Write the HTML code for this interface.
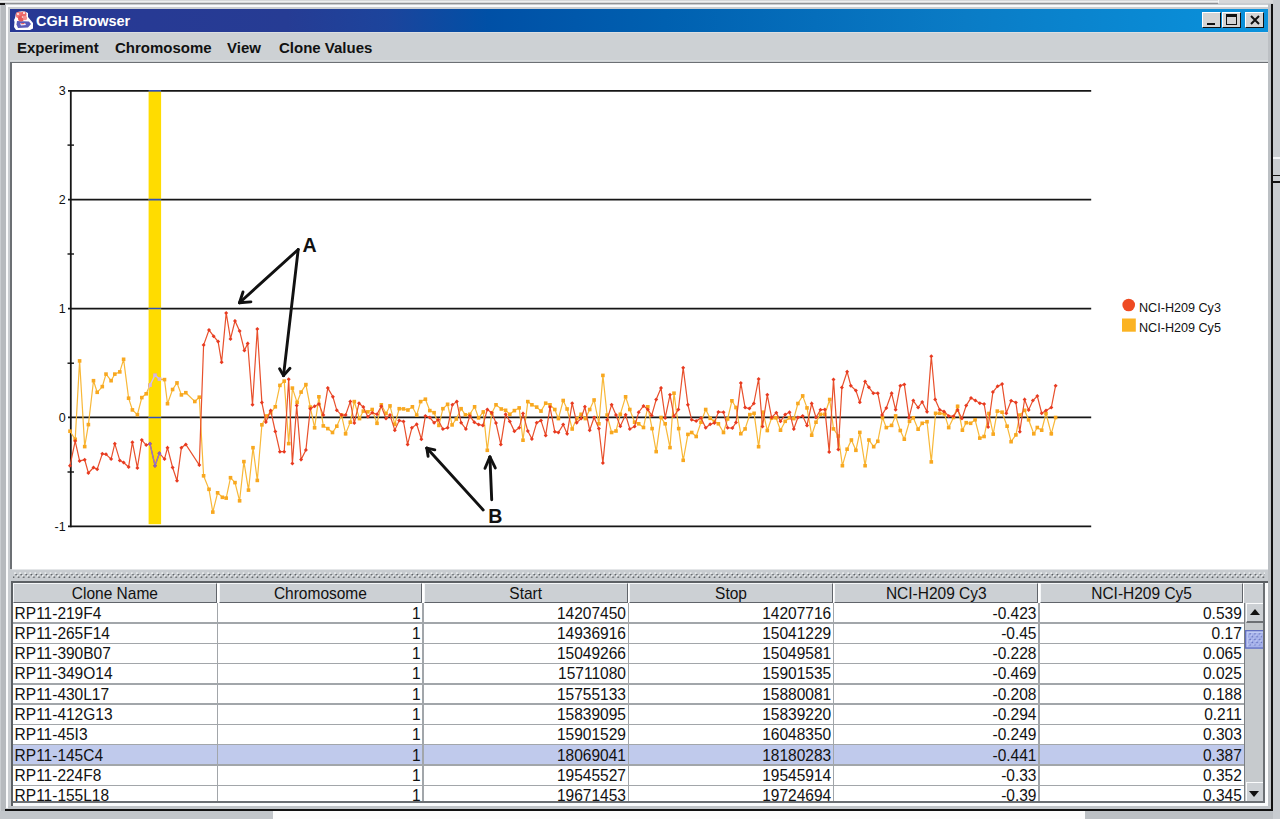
<!DOCTYPE html>
<html><head><meta charset="utf-8"><style>
*{margin:0;padding:0;box-sizing:border-box}
html,body{width:1280px;height:819px;overflow:hidden;background:#c9cdd1;position:relative;font-family:"Liberation Sans",sans-serif}
.a{position:absolute}
.hc{position:absolute;top:582.6px;height:20px;background:#ccd0d4;border-top:1.2px solid #f4f6f8;border-left:1.2px solid #f4f6f8;border-right:1.5px solid #60646a;border-bottom:1.5px solid #60646a;font-size:15.5px;color:#111;text-align:center;line-height:20.6px;white-space:nowrap}
.row{position:absolute;left:12.5px;width:1232px;height:20px;background:#fff}
.row.sel{background:#c0caec}
.cell{position:absolute;height:20px;line-height:20px;font-size:15.5px;color:#111;white-space:nowrap;transform:scaleY(1.08);transform-origin:50% 57%}
.cell.r{text-align:right}
.hl{position:absolute;left:12.5px;width:1232px;height:1.6px;background:#a2a6aa}
.vl{position:absolute;top:602.8px;width:1.5px;height:200px;background:#a2a6aa}
</style></head><body>
<!-- top strip -->
<div class="a" style="left:0;top:0;width:1280px;height:3px;background:#d6d8da"></div>
<div class="a" style="left:0;top:1px;width:1218px;height:1.2px;background:#eef0f0"></div>
<div class="a" style="left:0;top:3.1px;width:1218px;height:1.1px;background:#909294"></div><div class="a" style="left:1217.5px;top:0;width:1.2px;height:3px;background:#f4f4f4"></div>
<div class="a" style="left:0;top:3px;width:5px;height:1.6px;background:#111"></div>
<!-- left frame -->
<div class="a" style="left:1px;top:4.5px;width:4.9px;height:815px;background:#b6babe"></div>
<div class="a" style="left:5.9px;top:5.2px;width:2px;height:803px;background:#fafbfc"></div>
<div class="a" style="left:5.8px;top:5.2px;width:1263.7px;height:1.6px;background:#fafbfc"></div>
<!-- title bar -->
<div class="a" style="left:10.2px;top:9px;width:1258px;height:22.6px;background:linear-gradient(to right,#283894 0%,#263c94 22%,#1c449c 30%,#0050a6 38%,#0060b0 52%,#0a7cc6 76%,#0a92dc 100%)"></div>
<div class="a" style="left:35.8px;top:10.6px;font-size:15.5px;font-weight:bold;color:#fff;line-height:20px;transform:scaleX(0.935);transform-origin:0 0;white-space:nowrap">CGH Browser</div>
<!-- menu -->
<div class="a" style="left:10px;top:31.6px;width:1258.5px;height:31px;background:#cdd1d4"></div><div class="a" style="left:10px;top:31.6px;width:1258.5px;height:1.6px;background:#dcdfe2"></div><div class="a" style="left:10px;top:59.5px;width:1258.5px;height:1.5px;background:#d6dadc"></div>
<div class="a" style="left:17px;top:38px;font-size:15px;font-weight:bold;color:#111;line-height:20px;white-space:nowrap">Experiment</div>
<div class="a" style="left:115px;top:38px;font-size:15px;font-weight:bold;color:#111;line-height:20px;white-space:nowrap">Chromosome</div>
<div class="a" style="left:227px;top:38px;font-size:15px;font-weight:bold;color:#111;line-height:20px;white-space:nowrap">View</div>
<div class="a" style="left:279px;top:38px;font-size:15px;font-weight:bold;color:#111;line-height:20px;white-space:nowrap">Clone Values</div>
<!-- chart panel -->
<div class="a" style="left:10px;top:62.3px;width:1257.9px;height:507px;background:#fff;border-left:2px solid #6c7074;border-top:1.6px solid #6c7074"></div>
<!-- right frame -->
<div class="a" style="left:1267.8px;top:4px;width:3.2px;height:806px;background:#bcc0c4"></div>
<div class="a" style="left:1270.9px;top:4px;width:1.9px;height:807px;background:#111"></div>
<div class="a" style="left:1272.7px;top:0;width:7.3px;height:819px;background:#c8ccd0"></div>
<div class="a" style="left:1273px;top:157.3px;width:7px;height:1.5px;background:#f4f6f8"></div>
<div class="a" style="left:1272.5px;top:174.8px;width:7.5px;height:1.6px;background:#111"></div>
<div class="a" style="left:1272.5px;top:181px;width:7.5px;height:1.6px;background:#111"></div>
<!-- splitter -->
<div class="a" style="left:10.3px;top:569.3px;width:1257.5px;height:12.2px;background:#c8ccd0"></div><div class="a" style="left:12px;top:569.3px;width:1255.8px;height:1.2px;background:#e4e6e8"></div>
<svg class="a" style="left:13px;top:570px" width="1251.5" height="10"><defs><pattern id="sp" x="7" y="0" width="5.08" height="10" patternUnits="userSpaceOnUse">
<rect x="-0.6" y="2.45" width="1.5" height="1.5" fill="#f8f9fa"/><rect x="4.48" y="2.45" width="1.5" height="1.5" fill="#f8f9fa"/>
<rect x="0.45" y="3.9" width="1.5" height="1.5" fill="#54585c"/>
<rect x="1.8" y="5.15" width="1.5" height="1.5" fill="#f8f9fa"/>
<rect x="3.0" y="6.45" width="1.5" height="1.5" fill="#54585c"/>
</pattern></defs><rect width="1254" height="10" fill="url(#sp)"/></svg>
<!-- table frame -->
<div class="a" style="left:10.5px;top:580.5px;width:1257.2px;height:225.1px;background:#fff;border-left:2px solid #5c6064;border-top:2px solid #5c6064"></div>
<div class="hc" style="left:12.8px;width:204.2px"><span style="display:inline-block;transform:scaleY(1.08)">Clone Name</span></div>
<div class="hc" style="left:218.5px;width:203.8px"><span style="display:inline-block;transform:scaleY(1.08)">Chromosome</span></div>
<div class="hc" style="left:423.8px;width:203.8px"><span style="display:inline-block;transform:scaleY(1.08)">Start</span></div>
<div class="hc" style="left:629.1px;width:203.8px"><span style="display:inline-block;transform:scaleY(1.08)">Stop</span></div>
<div class="hc" style="left:834.4px;width:203.8px"><span style="display:inline-block;transform:scaleY(1.08)">NCI-H209 Cy3</span></div>
<div class="hc" style="left:1039.7px;width:203.8px"><span style="display:inline-block;transform:scaleY(1.08)">NCI-H209 Cy5</span></div>
<div class="a" style="left:1244.0px;top:582.6px;width:19.2px;height:20px;background:#ccd0d4;border-top:1.2px solid #f4f6f8"></div>
<div class="row" style="top:602.9px"></div>
<div class="cell" style="left:14.6px;top:603.5px">RP11-219F4</div>
<div class="cell r" style="left:218.5px;width:202.1px;top:603.5px">1</div>
<div class="cell r" style="left:423.8px;width:202.1px;top:603.5px">14207450</div>
<div class="cell r" style="left:629.1px;width:202.1px;top:603.5px">14207716</div>
<div class="cell r" style="left:834.4px;width:202.1px;top:603.5px">-0.423</div>
<div class="cell r" style="left:1039.7px;width:202.1px;top:603.5px">0.539</div>
<div class="row" style="top:623.2px"></div>
<div class="cell" style="left:14.6px;top:623.8px">RP11-265F14</div>
<div class="cell r" style="left:218.5px;width:202.1px;top:623.8px">1</div>
<div class="cell r" style="left:423.8px;width:202.1px;top:623.8px">14936916</div>
<div class="cell r" style="left:629.1px;width:202.1px;top:623.8px">15041229</div>
<div class="cell r" style="left:834.4px;width:202.1px;top:623.8px">-0.45</div>
<div class="cell r" style="left:1039.7px;width:202.1px;top:623.8px">0.17</div>
<div class="row" style="top:643.5px"></div>
<div class="cell" style="left:14.6px;top:644.1px">RP11-390B07</div>
<div class="cell r" style="left:218.5px;width:202.1px;top:644.1px">1</div>
<div class="cell r" style="left:423.8px;width:202.1px;top:644.1px">15049266</div>
<div class="cell r" style="left:629.1px;width:202.1px;top:644.1px">15049581</div>
<div class="cell r" style="left:834.4px;width:202.1px;top:644.1px">-0.228</div>
<div class="cell r" style="left:1039.7px;width:202.1px;top:644.1px">0.065</div>
<div class="row" style="top:663.8px"></div>
<div class="cell" style="left:14.6px;top:664.4px">RP11-349O14</div>
<div class="cell r" style="left:218.5px;width:202.1px;top:664.4px">1</div>
<div class="cell r" style="left:423.8px;width:202.1px;top:664.4px">15711080</div>
<div class="cell r" style="left:629.1px;width:202.1px;top:664.4px">15901535</div>
<div class="cell r" style="left:834.4px;width:202.1px;top:664.4px">-0.469</div>
<div class="cell r" style="left:1039.7px;width:202.1px;top:664.4px">0.025</div>
<div class="row" style="top:684.1px"></div>
<div class="cell" style="left:14.6px;top:684.7px">RP11-430L17</div>
<div class="cell r" style="left:218.5px;width:202.1px;top:684.7px">1</div>
<div class="cell r" style="left:423.8px;width:202.1px;top:684.7px">15755133</div>
<div class="cell r" style="left:629.1px;width:202.1px;top:684.7px">15880081</div>
<div class="cell r" style="left:834.4px;width:202.1px;top:684.7px">-0.208</div>
<div class="cell r" style="left:1039.7px;width:202.1px;top:684.7px">0.188</div>
<div class="row" style="top:704.3px"></div>
<div class="cell" style="left:14.6px;top:704.9px">RP11-412G13</div>
<div class="cell r" style="left:218.5px;width:202.1px;top:704.9px">1</div>
<div class="cell r" style="left:423.8px;width:202.1px;top:704.9px">15839095</div>
<div class="cell r" style="left:629.1px;width:202.1px;top:704.9px">15839220</div>
<div class="cell r" style="left:834.4px;width:202.1px;top:704.9px">-0.294</div>
<div class="cell r" style="left:1039.7px;width:202.1px;top:704.9px">0.211</div>
<div class="row" style="top:724.6px"></div>
<div class="cell" style="left:14.6px;top:725.2px">RP11-45I3</div>
<div class="cell r" style="left:218.5px;width:202.1px;top:725.2px">1</div>
<div class="cell r" style="left:423.8px;width:202.1px;top:725.2px">15901529</div>
<div class="cell r" style="left:629.1px;width:202.1px;top:725.2px">16048350</div>
<div class="cell r" style="left:834.4px;width:202.1px;top:725.2px">-0.249</div>
<div class="cell r" style="left:1039.7px;width:202.1px;top:725.2px">0.303</div>
<div class="row sel" style="top:744.9px"></div>
<div class="cell" style="left:14.6px;top:745.5px">RP11-145C4</div>
<div class="cell r" style="left:218.5px;width:202.1px;top:745.5px">1</div>
<div class="cell r" style="left:423.8px;width:202.1px;top:745.5px">18069041</div>
<div class="cell r" style="left:629.1px;width:202.1px;top:745.5px">18180283</div>
<div class="cell r" style="left:834.4px;width:202.1px;top:745.5px">-0.441</div>
<div class="cell r" style="left:1039.7px;width:202.1px;top:745.5px">0.387</div>
<div class="row" style="top:765.2px"></div>
<div class="cell" style="left:14.6px;top:765.8px">RP11-224F8</div>
<div class="cell r" style="left:218.5px;width:202.1px;top:765.8px">1</div>
<div class="cell r" style="left:423.8px;width:202.1px;top:765.8px">19545527</div>
<div class="cell r" style="left:629.1px;width:202.1px;top:765.8px">19545914</div>
<div class="cell r" style="left:834.4px;width:202.1px;top:765.8px">-0.33</div>
<div class="cell r" style="left:1039.7px;width:202.1px;top:765.8px">0.352</div>
<div class="row" style="top:785.5px"></div>
<div class="cell" style="left:14.6px;top:786.1px">RP11-155L18</div>
<div class="cell r" style="left:218.5px;width:202.1px;top:786.1px">1</div>
<div class="cell r" style="left:423.8px;width:202.1px;top:786.1px">19671453</div>
<div class="cell r" style="left:629.1px;width:202.1px;top:786.1px">19724694</div>
<div class="cell r" style="left:834.4px;width:202.1px;top:786.1px">-0.39</div>
<div class="cell r" style="left:1039.7px;width:202.1px;top:786.1px">0.345</div>
<div class="hl" style="top:622.2px"></div>
<div class="hl" style="top:642.5px"></div>
<div class="hl" style="top:662.8px"></div>
<div class="hl" style="top:683.1px"></div>
<div class="hl" style="top:703.3px"></div>
<div class="hl" style="top:723.6px"></div>
<div class="hl" style="top:743.9px"></div>
<div class="hl" style="top:764.2px"></div>
<div class="hl" style="top:784.5px"></div>
<div class="hl" style="top:804.8px"></div>
<div class="vl" style="left:216.9px"></div>
<div class="vl" style="left:422.2px"></div>
<div class="vl" style="left:627.5px"></div>
<div class="vl" style="left:832.8px"></div>
<div class="vl" style="left:1038.1px"></div>
<!-- scrollbar -->
<div class="a" style="left:1244.3px;top:602.6px;width:19px;height:200px;background:#c6cacd;border-left:1.3px solid #7a7e82"></div>
<div class="a" style="left:1245.6px;top:603.2px;width:17.8px;height:20.3px;background:#ccd0d4;border-top:1.4px solid #fbfcfd;border-left:1.3px solid #fbfcfd;border-bottom:2px solid #6c7074"></div>
<div class="a" style="left:1249.6px;top:609px;width:0;height:0;border-left:5.6px solid transparent;border-right:5.6px solid transparent;border-bottom:6px solid #111"></div>
<div class="a" style="left:1245.6px;top:782.3px;width:17.8px;height:20.3px;background:#ccd0d4;border-top:1.4px solid #fbfcfd;border-left:1.3px solid #fbfcfd;border-bottom:2px solid #6c7074"></div>
<div class="a" style="left:1249.2px;top:790.6px;width:0;height:0;border-left:5.6px solid transparent;border-right:5.6px solid transparent;border-top:6px solid #111"></div>
<svg class="a" style="left:1244.9px;top:630px" width="19.3" height="18.7"><defs><pattern id="tp" x="4" y="8.2" width="4.76" height="5.7" patternUnits="userSpaceOnUse"><rect x="-0.65" y="-0.65" width="1.4" height="1.4" fill="#d0d8fa"/><rect x="4.11" y="-0.65" width="1.4" height="1.4" fill="#d0d8fa"/><rect x="0.35" y="0.6" width="1.4" height="1.4" fill="#5a68b8"/><rect x="1.55" y="2.2" width="1.4" height="1.4" fill="#d0d8fa"/><rect x="2.55" y="3.45" width="1.4" height="1.4" fill="#5a68b8"/></pattern></defs><rect x="0" y="0" width="19.3" height="18.7" fill="#a6b2ea"/><rect x="3" y="3" width="14.2" height="12.5" fill="url(#tp)"/><path d="M2 17V2H18" fill="none" stroke="#c8d2f6" stroke-width="1.3"/><rect x="0.65" y="0.65" width="18" height="17.4" fill="none" stroke="#6270c0" stroke-width="1.3"/></svg>
<!-- table bottom border -->
<div class="a" style="left:12.5px;top:801.2px;width:1252.4px;height:1.6px;background:#6c7074"></div>
<div class="a" style="left:1263.2px;top:582.5px;width:1.7px;height:220.3px;background:#6c7074"></div><div class="a" style="left:1264.9px;top:582.5px;width:2.3px;height:223px;background:#fafbfc"></div>
<div class="a" style="left:12.5px;top:802.8px;width:1255px;height:2.8px;background:#fafbfc"></div>
<div class="a" style="left:7.9px;top:805.6px;width:1263px;height:3.4px;background:#c0c4c8"></div>
<div class="a" style="left:5px;top:809px;width:1267.8px;height:1.9px;background:#111"></div>
<!-- bottom strip -->
<div class="a" style="left:0;top:811.2px;width:272.5px;height:8px;background:#c2c6ca"></div>
<div class="a" style="left:272.5px;top:811.2px;width:812px;height:8px;background:#fcfcfc"></div>
<div class="a" style="left:1084.5px;top:811.2px;width:188px;height:8px;background:#bcc0c4"></div>
<!-- title buttons -->
<div class="a" style="left:1202px;top:11.7px;width:18.8px;height:16.8px;background:#d4d4d4;border-top:1.3px solid #fff;border-left:1.3px solid #fff;border-right:1.5px solid #111;border-bottom:1.5px solid #111"></div>
<div class="a" style="left:1222px;top:11.7px;width:19.3px;height:16.8px;background:#d4d4d4;border-top:1.3px solid #fff;border-left:1.3px solid #fff;border-right:1.5px solid #111;border-bottom:1.5px solid #111"></div>
<div class="a" style="left:1245px;top:11.7px;width:19.4px;height:16.8px;background:#d4d4d4;border-top:1.3px solid #fff;border-left:1.3px solid #fff;border-right:1.5px solid #111;border-bottom:1.5px solid #111"></div>
<div class="a" style="left:1207px;top:22.5px;width:7.5px;height:2.2px;background:#111"></div>
<div class="a" style="left:1226.2px;top:14.3px;width:10.5px;height:10.8px;border:1.2px solid #111;border-top:3px solid #111"></div>
<svg class="a" style="left:1249px;top:14px" width="12" height="12"><path d="M2 2L10 10M10 2L2 10" stroke="#111" stroke-width="2"/></svg>
<!-- icon -->
<svg class="a" style="left:12.5px;top:9.5px" width="21" height="21">
<path d="M3 3 Q7 0.5 12 1.5 L15 3 L15 7 L20 13 L20 18.5 L17 20 L3 20 L1 17 L1.5 12 L1 10 L2 8 Z" fill="#fff"/>
<path d="M4 11 L16 11.5 L18 14 L15 17.5 L5 18 L3.5 14.5 Z" fill="#5a5cb8"/>
<path d="M7 13.5 L12 13 L13 15 L8 15.5Z" fill="#f2f2ff"/><path d="M8 13.2 L11.5 13 L11.5 14 L8.5 14.2Z" fill="#e05050"/>
<circle cx="6" cy="5" r="3.2" fill="#f07a7a"/><circle cx="10.5" cy="4.5" r="3" fill="#ee6a6a"/><circle cx="8" cy="8.5" r="3" fill="#e85858"/><circle cx="12" cy="8" r="2.2" fill="#f49090"/>
<circle cx="5" cy="4" r="0.9" fill="#fff"/><circle cx="11" cy="3" r="1" fill="#fff"/><circle cx="9.5" cy="7" r="0.8" fill="#fff"/>
</svg>
<svg width="1280" height="819" style="position:absolute;left:0;top:0">
<defs><clipPath id="bar"><rect x="148.6" y="90" width="12.5" height="434"/></clipPath></defs>
<line x1="68" y1="90.75" x2="1091.2" y2="90.75" stroke="#161616" stroke-width="1.75"/>
<line x1="68" y1="199.66" x2="1091.2" y2="199.66" stroke="#161616" stroke-width="1.75"/>
<line x1="68" y1="308.56" x2="1091.2" y2="308.56" stroke="#161616" stroke-width="1.75"/>
<line x1="68" y1="417.47" x2="1091.2" y2="417.47" stroke="#161616" stroke-width="1.75"/>
<line x1="68" y1="526.4" x2="1091.2" y2="526.4" stroke="#161616" stroke-width="1.75"/>
<line x1="70.8" y1="90" x2="70.8" y2="527.2" stroke="#161616" stroke-width="1.8"/>
<line x1="67.5" y1="145.1" x2="74" y2="145.1" stroke="#111" stroke-width="1.4"/>
<line x1="67.5" y1="254" x2="74" y2="254" stroke="#111" stroke-width="1.4"/>
<line x1="67.5" y1="363.2" x2="74" y2="363.2" stroke="#111" stroke-width="1.4"/>
<line x1="67.5" y1="472" x2="74" y2="472" stroke="#111" stroke-width="1.4"/>
<text x="65.6" y="95.35" text-anchor="end" font-family="Liberation Sans" font-size="12.5" fill="#111">3</text>
<text x="65.6" y="204.26" text-anchor="end" font-family="Liberation Sans" font-size="12.5" fill="#111">2</text>
<text x="65.6" y="313.16" text-anchor="end" font-family="Liberation Sans" font-size="12.5" fill="#111">1</text>
<text x="65.6" y="422.07000000000005" text-anchor="end" font-family="Liberation Sans" font-size="12.5" fill="#111">0</text>
<text x="65.6" y="531.0" text-anchor="end" font-family="Liberation Sans" font-size="12.5" fill="#111">-1</text>
<rect x="148.6" y="91.4" width="12.5" height="432.8" fill="#ffdc00"/>
<polyline points="70.0,431.2 75.2,439.3 79.6,360.9 84.7,446.6 88.4,424.6 93.5,380.7 97.2,392.3 102.3,386.6 106.0,374.1 111.1,380.7 114.8,374.1 119.8,371.9 123.6,359.3 128.6,398.2 132.4,409.9 137.4,414.7 141.8,397.6 146.2,393.8 150.0,385.1 155.0,375.2 159.4,379.1 164.5,379.6 167.5,403.7 172.6,389.5 177.0,382.9 181.4,394.9 185.8,392.7 194.8,401.5 199.3,397.2 203.6,475.8 209.0,489.3 212.8,512.1 217.6,492.8 222.4,497.3 226.2,498.1 230.5,477.7 235.0,482.6 239.6,500.8 243.9,461.6 248.5,490.1 253.0,447.7 257.3,480.4 261.9,424.8 266.4,416.0 270.7,412.8 275.3,406.8 279.9,385.4 284.2,381.1 288.7,443.6 292.4,388.1 297.1,402.4 301.1,392.1 305.9,384.6 310.3,407.1 314.6,427.8 318.9,396.8 323.3,425.9 327.8,428.6 332.5,432.5 336.8,426.2 341.6,415.1 345.6,433.8 350.3,422.2 354.3,401.6 359.5,418.6 363.3,411.1 367.8,411.9 372.2,409.5 377.0,423.3 381.3,404.8 386.0,413.5 390.0,405.9 394.8,424.3 399.2,408.7 403.5,408.9 407.9,410.0 412.4,406.8 416.7,415.1 420.6,401.6 425.4,399.2 429.8,410.6 434.1,412.7 438.9,425.4 442.9,408.7 447.6,404.3 452.1,424.9 456.3,419.0 461.1,408.7 465.4,414.8 469.8,414.3 474.6,406.8 478.6,417.9 483.3,411.9 487.3,450.3 491.7,413.2 496.0,404.8 501.3,409.0 505.6,410.3 509.8,414.3 514.4,410.6 519.2,407.9 523.0,440.2 527.8,401.6 531.9,404.8 536.7,407.1 541.0,411.1 545.7,403.2 550.0,404.8 554.8,409.5 558.4,418.6 563.2,400.5 567.1,409.0 572.2,429.0 576.7,418.6 581.1,414.3 585.4,418.6 589.7,409.5 594.1,400.0 598.9,423.8 602.9,375.4 607.1,415.1 611.6,432.5 616.0,431.0 620.3,414.3 625.6,396.8 629.8,409.5 634.6,422.2 638.7,423.8 643.5,427.5 647.8,406.8 652.1,428.6 656.2,451.6 661.0,417.5 665.2,423.8 670.0,447.6 674.0,393.2 678.7,428.6 683.2,460.3 687.9,434.4 691.7,432.5 696.2,436.5 701.0,422.2 705.7,409.5 710.2,418.3 714.4,421.4 718.4,423.8 723.5,432.5 727.6,419.0 731.9,400.8 736.0,407.5 740.8,433.7 745.1,428.9 749.8,414.6 754.1,413.3 758.6,446.7 763.0,412.2 767.3,430.5 771.6,418.1 776.0,417.8 780.5,430.2 785.2,421.3 789.5,417.8 793.8,418.6 797.9,403.5 802.7,395.9 807.0,407.9 811.7,435.2 816.0,422.2 820.5,414.3 824.9,414.3 829.7,399.5 833.5,428.9 838.3,436.0 842.4,465.7 847.1,449.2 851.4,440.0 855.9,450.3 859.8,432.4 865.1,465.7 868.9,440.0 873.7,446.7 877.8,441.3 882.5,417.5 886.3,427.6 891.6,425.4 895.6,415.9 900.3,430.5 904.3,439.2 909.5,421.3 913.3,417.8 918.1,429.2 922.2,423.3 927.0,421.7 931.3,461.9 935.6,413.3 939.7,413.3 944.4,413.8 948.7,427.6 953.5,417.5 957.6,406.3 962.4,430.2 966.2,422.7 970.6,423.3 975.1,419.8 979.8,438.1 984.1,436.5 988.9,413.5 993.2,434.1 997.3,411.1 1002.1,412.2 1007.1,426.2 1011.1,441.7 1015.9,434.9 1019.8,415.1 1024.6,410.3 1028.6,419.8 1033.8,433.8 1037.3,427.5 1041.7,430.2 1046.0,413.5 1051.3,433.8 1055.6,417.5" fill="none" stroke="#f8b838" stroke-width="1.2"/>
<g fill="#f8a820"><rect x="68.2" y="429.4" width="3.6" height="3.6"/><rect x="73.4" y="437.5" width="3.6" height="3.6"/><rect x="77.8" y="359.1" width="3.6" height="3.6"/><rect x="82.9" y="444.8" width="3.6" height="3.6"/><rect x="86.6" y="422.8" width="3.6" height="3.6"/><rect x="91.7" y="378.9" width="3.6" height="3.6"/><rect x="95.4" y="390.5" width="3.6" height="3.6"/><rect x="100.5" y="384.8" width="3.6" height="3.6"/><rect x="104.2" y="372.3" width="3.6" height="3.6"/><rect x="109.3" y="378.9" width="3.6" height="3.6"/><rect x="113.0" y="372.3" width="3.6" height="3.6"/><rect x="118.0" y="370.1" width="3.6" height="3.6"/><rect x="121.8" y="357.5" width="3.6" height="3.6"/><rect x="126.8" y="396.4" width="3.6" height="3.6"/><rect x="130.6" y="408.1" width="3.6" height="3.6"/><rect x="135.6" y="412.9" width="3.6" height="3.6"/><rect x="140.0" y="395.8" width="3.6" height="3.6"/><rect x="144.4" y="392.0" width="3.6" height="3.6"/><rect x="148.2" y="383.3" width="3.6" height="3.6"/><rect x="153.2" y="373.4" width="3.6" height="3.6"/><rect x="157.6" y="377.3" width="3.6" height="3.6"/><rect x="162.7" y="377.8" width="3.6" height="3.6"/><rect x="165.7" y="401.9" width="3.6" height="3.6"/><rect x="170.8" y="387.7" width="3.6" height="3.6"/><rect x="175.2" y="381.1" width="3.6" height="3.6"/><rect x="179.6" y="393.1" width="3.6" height="3.6"/><rect x="184.0" y="390.9" width="3.6" height="3.6"/><rect x="193.0" y="399.7" width="3.6" height="3.6"/><rect x="197.5" y="395.4" width="3.6" height="3.6"/><rect x="201.8" y="474.0" width="3.6" height="3.6"/><rect x="207.2" y="487.5" width="3.6" height="3.6"/><rect x="211.0" y="510.3" width="3.6" height="3.6"/><rect x="215.8" y="491.0" width="3.6" height="3.6"/><rect x="220.6" y="495.5" width="3.6" height="3.6"/><rect x="224.4" y="496.3" width="3.6" height="3.6"/><rect x="228.7" y="475.9" width="3.6" height="3.6"/><rect x="233.2" y="480.8" width="3.6" height="3.6"/><rect x="237.8" y="499.0" width="3.6" height="3.6"/><rect x="242.1" y="459.8" width="3.6" height="3.6"/><rect x="246.7" y="488.3" width="3.6" height="3.6"/><rect x="251.2" y="445.9" width="3.6" height="3.6"/><rect x="255.5" y="478.6" width="3.6" height="3.6"/><rect x="260.1" y="423.0" width="3.6" height="3.6"/><rect x="264.6" y="414.2" width="3.6" height="3.6"/><rect x="268.9" y="411.0" width="3.6" height="3.6"/><rect x="273.5" y="405.0" width="3.6" height="3.6"/><rect x="278.1" y="383.6" width="3.6" height="3.6"/><rect x="282.4" y="379.3" width="3.6" height="3.6"/><rect x="286.9" y="441.8" width="3.6" height="3.6"/><rect x="290.6" y="386.3" width="3.6" height="3.6"/><rect x="295.3" y="400.6" width="3.6" height="3.6"/><rect x="299.3" y="390.3" width="3.6" height="3.6"/><rect x="304.1" y="382.8" width="3.6" height="3.6"/><rect x="308.5" y="405.3" width="3.6" height="3.6"/><rect x="312.8" y="426.0" width="3.6" height="3.6"/><rect x="317.1" y="395.0" width="3.6" height="3.6"/><rect x="321.5" y="424.1" width="3.6" height="3.6"/><rect x="326.0" y="426.8" width="3.6" height="3.6"/><rect x="330.7" y="430.7" width="3.6" height="3.6"/><rect x="335.0" y="424.4" width="3.6" height="3.6"/><rect x="339.8" y="413.3" width="3.6" height="3.6"/><rect x="343.8" y="432.0" width="3.6" height="3.6"/><rect x="348.5" y="420.4" width="3.6" height="3.6"/><rect x="352.5" y="399.8" width="3.6" height="3.6"/><rect x="357.7" y="416.8" width="3.6" height="3.6"/><rect x="361.5" y="409.3" width="3.6" height="3.6"/><rect x="366.0" y="410.1" width="3.6" height="3.6"/><rect x="370.4" y="407.7" width="3.6" height="3.6"/><rect x="375.2" y="421.5" width="3.6" height="3.6"/><rect x="379.5" y="403.0" width="3.6" height="3.6"/><rect x="384.2" y="411.7" width="3.6" height="3.6"/><rect x="388.2" y="404.1" width="3.6" height="3.6"/><rect x="393.0" y="422.5" width="3.6" height="3.6"/><rect x="397.4" y="406.9" width="3.6" height="3.6"/><rect x="401.7" y="407.1" width="3.6" height="3.6"/><rect x="406.1" y="408.2" width="3.6" height="3.6"/><rect x="410.6" y="405.0" width="3.6" height="3.6"/><rect x="414.9" y="413.3" width="3.6" height="3.6"/><rect x="418.8" y="399.8" width="3.6" height="3.6"/><rect x="423.6" y="397.4" width="3.6" height="3.6"/><rect x="428.0" y="408.8" width="3.6" height="3.6"/><rect x="432.3" y="410.9" width="3.6" height="3.6"/><rect x="437.1" y="423.6" width="3.6" height="3.6"/><rect x="441.1" y="406.9" width="3.6" height="3.6"/><rect x="445.8" y="402.5" width="3.6" height="3.6"/><rect x="450.3" y="423.1" width="3.6" height="3.6"/><rect x="454.5" y="417.2" width="3.6" height="3.6"/><rect x="459.3" y="406.9" width="3.6" height="3.6"/><rect x="463.6" y="413.0" width="3.6" height="3.6"/><rect x="468.0" y="412.5" width="3.6" height="3.6"/><rect x="472.8" y="405.0" width="3.6" height="3.6"/><rect x="476.8" y="416.1" width="3.6" height="3.6"/><rect x="481.5" y="410.1" width="3.6" height="3.6"/><rect x="485.5" y="448.5" width="3.6" height="3.6"/><rect x="489.9" y="411.4" width="3.6" height="3.6"/><rect x="494.2" y="403.0" width="3.6" height="3.6"/><rect x="499.5" y="407.2" width="3.6" height="3.6"/><rect x="503.8" y="408.5" width="3.6" height="3.6"/><rect x="508.0" y="412.5" width="3.6" height="3.6"/><rect x="512.6" y="408.8" width="3.6" height="3.6"/><rect x="517.4" y="406.1" width="3.6" height="3.6"/><rect x="521.2" y="438.4" width="3.6" height="3.6"/><rect x="526.0" y="399.8" width="3.6" height="3.6"/><rect x="530.1" y="403.0" width="3.6" height="3.6"/><rect x="534.9" y="405.3" width="3.6" height="3.6"/><rect x="539.2" y="409.3" width="3.6" height="3.6"/><rect x="543.9" y="401.4" width="3.6" height="3.6"/><rect x="548.2" y="403.0" width="3.6" height="3.6"/><rect x="553.0" y="407.7" width="3.6" height="3.6"/><rect x="556.6" y="416.8" width="3.6" height="3.6"/><rect x="561.4" y="398.7" width="3.6" height="3.6"/><rect x="565.3" y="407.2" width="3.6" height="3.6"/><rect x="570.4" y="427.2" width="3.6" height="3.6"/><rect x="574.9" y="416.8" width="3.6" height="3.6"/><rect x="579.3" y="412.5" width="3.6" height="3.6"/><rect x="583.6" y="416.8" width="3.6" height="3.6"/><rect x="587.9" y="407.7" width="3.6" height="3.6"/><rect x="592.3" y="398.2" width="3.6" height="3.6"/><rect x="597.1" y="422.0" width="3.6" height="3.6"/><rect x="601.1" y="373.6" width="3.6" height="3.6"/><rect x="605.3" y="413.3" width="3.6" height="3.6"/><rect x="609.8" y="430.7" width="3.6" height="3.6"/><rect x="614.2" y="429.2" width="3.6" height="3.6"/><rect x="618.5" y="412.5" width="3.6" height="3.6"/><rect x="623.8" y="395.0" width="3.6" height="3.6"/><rect x="628.0" y="407.7" width="3.6" height="3.6"/><rect x="632.8" y="420.4" width="3.6" height="3.6"/><rect x="636.9" y="422.0" width="3.6" height="3.6"/><rect x="641.7" y="425.7" width="3.6" height="3.6"/><rect x="646.0" y="405.0" width="3.6" height="3.6"/><rect x="650.3" y="426.8" width="3.6" height="3.6"/><rect x="654.4" y="449.8" width="3.6" height="3.6"/><rect x="659.2" y="415.7" width="3.6" height="3.6"/><rect x="663.4" y="422.0" width="3.6" height="3.6"/><rect x="668.2" y="445.8" width="3.6" height="3.6"/><rect x="672.2" y="391.4" width="3.6" height="3.6"/><rect x="676.9" y="426.8" width="3.6" height="3.6"/><rect x="681.4" y="458.5" width="3.6" height="3.6"/><rect x="686.1" y="432.6" width="3.6" height="3.6"/><rect x="689.9" y="430.7" width="3.6" height="3.6"/><rect x="694.4" y="434.7" width="3.6" height="3.6"/><rect x="699.2" y="420.4" width="3.6" height="3.6"/><rect x="703.9" y="407.7" width="3.6" height="3.6"/><rect x="708.4" y="416.5" width="3.6" height="3.6"/><rect x="712.6" y="419.6" width="3.6" height="3.6"/><rect x="716.6" y="422.0" width="3.6" height="3.6"/><rect x="721.7" y="430.7" width="3.6" height="3.6"/><rect x="725.8" y="417.2" width="3.6" height="3.6"/><rect x="730.1" y="399.0" width="3.6" height="3.6"/><rect x="734.2" y="405.7" width="3.6" height="3.6"/><rect x="739.0" y="431.9" width="3.6" height="3.6"/><rect x="743.3" y="427.1" width="3.6" height="3.6"/><rect x="748.0" y="412.8" width="3.6" height="3.6"/><rect x="752.3" y="411.5" width="3.6" height="3.6"/><rect x="756.8" y="444.9" width="3.6" height="3.6"/><rect x="761.2" y="410.4" width="3.6" height="3.6"/><rect x="765.5" y="428.7" width="3.6" height="3.6"/><rect x="769.8" y="416.3" width="3.6" height="3.6"/><rect x="774.2" y="416.0" width="3.6" height="3.6"/><rect x="778.7" y="428.4" width="3.6" height="3.6"/><rect x="783.4" y="419.5" width="3.6" height="3.6"/><rect x="787.7" y="416.0" width="3.6" height="3.6"/><rect x="792.0" y="416.8" width="3.6" height="3.6"/><rect x="796.1" y="401.7" width="3.6" height="3.6"/><rect x="800.9" y="394.1" width="3.6" height="3.6"/><rect x="805.2" y="406.1" width="3.6" height="3.6"/><rect x="809.9" y="433.4" width="3.6" height="3.6"/><rect x="814.2" y="420.4" width="3.6" height="3.6"/><rect x="818.7" y="412.5" width="3.6" height="3.6"/><rect x="823.1" y="412.5" width="3.6" height="3.6"/><rect x="827.9" y="397.7" width="3.6" height="3.6"/><rect x="831.7" y="427.1" width="3.6" height="3.6"/><rect x="836.5" y="434.2" width="3.6" height="3.6"/><rect x="840.6" y="463.9" width="3.6" height="3.6"/><rect x="845.3" y="447.4" width="3.6" height="3.6"/><rect x="849.6" y="438.2" width="3.6" height="3.6"/><rect x="854.1" y="448.5" width="3.6" height="3.6"/><rect x="858.0" y="430.6" width="3.6" height="3.6"/><rect x="863.3" y="463.9" width="3.6" height="3.6"/><rect x="867.1" y="438.2" width="3.6" height="3.6"/><rect x="871.9" y="444.9" width="3.6" height="3.6"/><rect x="876.0" y="439.5" width="3.6" height="3.6"/><rect x="880.7" y="415.7" width="3.6" height="3.6"/><rect x="884.5" y="425.8" width="3.6" height="3.6"/><rect x="889.8" y="423.6" width="3.6" height="3.6"/><rect x="893.8" y="414.1" width="3.6" height="3.6"/><rect x="898.5" y="428.7" width="3.6" height="3.6"/><rect x="902.5" y="437.4" width="3.6" height="3.6"/><rect x="907.7" y="419.5" width="3.6" height="3.6"/><rect x="911.5" y="416.0" width="3.6" height="3.6"/><rect x="916.3" y="427.4" width="3.6" height="3.6"/><rect x="920.4" y="421.5" width="3.6" height="3.6"/><rect x="925.2" y="419.9" width="3.6" height="3.6"/><rect x="929.5" y="460.1" width="3.6" height="3.6"/><rect x="933.8" y="411.5" width="3.6" height="3.6"/><rect x="937.9" y="411.5" width="3.6" height="3.6"/><rect x="942.6" y="412.0" width="3.6" height="3.6"/><rect x="946.9" y="425.8" width="3.6" height="3.6"/><rect x="951.7" y="415.7" width="3.6" height="3.6"/><rect x="955.8" y="404.5" width="3.6" height="3.6"/><rect x="960.6" y="428.4" width="3.6" height="3.6"/><rect x="964.4" y="420.9" width="3.6" height="3.6"/><rect x="968.8" y="421.5" width="3.6" height="3.6"/><rect x="973.3" y="418.0" width="3.6" height="3.6"/><rect x="978.0" y="436.3" width="3.6" height="3.6"/><rect x="982.3" y="434.7" width="3.6" height="3.6"/><rect x="987.1" y="411.7" width="3.6" height="3.6"/><rect x="991.4" y="432.3" width="3.6" height="3.6"/><rect x="995.5" y="409.3" width="3.6" height="3.6"/><rect x="1000.3" y="410.4" width="3.6" height="3.6"/><rect x="1005.3" y="424.4" width="3.6" height="3.6"/><rect x="1009.3" y="439.9" width="3.6" height="3.6"/><rect x="1014.1" y="433.1" width="3.6" height="3.6"/><rect x="1018.0" y="413.3" width="3.6" height="3.6"/><rect x="1022.8" y="408.5" width="3.6" height="3.6"/><rect x="1026.8" y="418.0" width="3.6" height="3.6"/><rect x="1032.0" y="432.0" width="3.6" height="3.6"/><rect x="1035.5" y="425.7" width="3.6" height="3.6"/><rect x="1039.9" y="428.4" width="3.6" height="3.6"/><rect x="1044.2" y="411.7" width="3.6" height="3.6"/><rect x="1049.5" y="432.0" width="3.6" height="3.6"/><rect x="1053.8" y="415.7" width="3.6" height="3.6"/></g>
<polyline points="70.0,465.7 75.2,441.1 79.6,460.9 84.7,459.8 88.4,473.0 93.5,467.5 97.2,469.2 102.3,453.8 106.0,454.3 111.1,459.1 114.8,443.7 119.8,460.4 123.6,462.6 128.6,467.0 132.4,442.2 137.4,467.9 141.8,440.0 146.2,445.1 150.0,443.7 155.0,465.7 159.4,453.2 164.5,459.1 167.5,447.7 172.6,467.5 177.0,480.7 181.4,447.7 185.8,444.4 199.3,465.1 203.6,345.1 209.0,330.1 213.6,336.2 218.1,341.6 221.6,362.3 226.2,312.9 230.5,338.9 235.0,320.9 239.6,330.9 244.4,350.5 247.7,343.5 252.5,404.7 257.3,329.0 261.9,402.6 265.9,422.1 270.7,410.6 275.3,431.5 279.9,451.7 284.2,451.7 288.7,379.2 292.4,463.5 296.7,405.6 301.1,459.5 305.9,450.0 310.3,408.7 314.6,406.3 318.9,404.0 323.3,415.1 327.8,388.1 332.9,396.8 336.8,410.3 341.6,415.1 345.6,415.1 350.3,401.6 354.3,423.0 359.0,403.2 363.3,407.1 367.8,416.7 372.2,412.7 377.0,414.3 381.3,406.3 386.0,418.6 390.0,415.1 394.8,430.2 399.2,420.6 403.5,421.4 407.6,444.4 411.9,427.8 416.7,424.3 421.4,439.2 425.4,415.9 429.8,417.5 434.1,422.7 438.1,419.8 442.9,429.0 447.6,427.8 452.4,404.8 456.8,401.6 461.1,422.7 465.9,429.0 469.8,415.9 474.3,422.2 478.6,424.6 482.9,425.4 487.3,409.5 491.7,412.7 496.0,423.0 500.8,444.4 505.6,414.3 509.8,421.4 514.4,431.3 519.2,427.8 523.0,413.5 527.8,431.0 531.9,438.9 536.7,422.7 541.0,420.6 545.7,435.4 550.0,407.1 554.8,431.7 558.4,432.5 563.2,424.6 567.1,433.8 572.2,403.2 576.7,422.7 581.1,418.6 584.9,406.8 589.7,430.2 594.1,417.5 598.9,428.6 602.9,463.0 607.1,419.8 611.6,404.8 616.0,415.1 620.3,426.2 625.6,414.8 629.8,429.0 634.6,426.5 638.7,412.2 643.5,405.9 647.8,409.5 651.7,415.4 656.2,399.5 661.0,388.1 665.2,417.9 670.0,394.8 674.0,416.3 678.4,409.5 683.2,367.8 687.9,404.8 691.7,419.8 696.2,421.1 701.0,417.9 705.7,427.8 710.2,424.3 714.4,423.0 718.4,411.9 723.5,412.2 727.6,427.8 732.4,428.1 736.0,422.5 740.8,382.9 745.1,407.5 749.4,408.6 753.8,403.5 758.6,378.9 762.5,426.5 767.3,394.8 771.6,417.5 776.3,412.7 780.5,421.3 785.2,414.6 789.5,412.2 793.8,428.9 797.9,417.5 802.7,415.9 807.0,425.4 811.7,403.5 816.0,417.5 820.5,409.8 824.9,409.5 829.2,451.9 833.5,379.4 838.3,449.5 841.9,387.6 847.1,371.7 850.8,385.7 855.9,390.5 859.8,402.2 865.1,381.6 868.9,387.3 873.3,393.2 877.8,393.2 882.1,414.9 886.3,407.9 891.6,393.2 895.6,409.8 900.3,385.7 904.3,384.4 909.0,417.8 913.3,400.6 918.1,407.5 922.2,401.9 927.0,411.7 931.3,356.2 935.2,399.5 939.7,409.8 944.0,411.4 948.7,415.9 953.5,416.3 957.6,410.0 961.9,418.6 966.2,405.6 971.0,397.9 975.4,400.5 979.8,403.2 984.1,404.0 988.1,427.0 992.9,392.1 997.6,386.2 1002.1,384.1 1006.3,413.2 1011.1,400.8 1015.9,402.4 1019.8,431.7 1024.6,399.5 1028.6,410.0 1032.9,400.5 1037.3,396.0 1041.7,413.2 1046.0,410.6 1051.3,407.5 1055.6,385.7" fill="none" stroke="#e8502c" stroke-width="1.2"/>
<g fill="#e83a20"><path d="M68.0 465.7L70.0 463.7L72.0 465.7L70.0 467.7Z"/><path d="M73.2 441.1L75.2 439.1L77.2 441.1L75.2 443.1Z"/><path d="M77.6 460.9L79.6 458.9L81.6 460.9L79.6 462.9Z"/><path d="M82.7 459.8L84.7 457.8L86.7 459.8L84.7 461.8Z"/><path d="M86.4 473.0L88.4 471.0L90.4 473.0L88.4 475.0Z"/><path d="M91.5 467.5L93.5 465.5L95.5 467.5L93.5 469.5Z"/><path d="M95.2 469.2L97.2 467.2L99.2 469.2L97.2 471.2Z"/><path d="M100.3 453.8L102.3 451.8L104.3 453.8L102.3 455.8Z"/><path d="M104.0 454.3L106.0 452.3L108.0 454.3L106.0 456.3Z"/><path d="M109.1 459.1L111.1 457.1L113.1 459.1L111.1 461.1Z"/><path d="M112.8 443.7L114.8 441.7L116.8 443.7L114.8 445.7Z"/><path d="M117.8 460.4L119.8 458.4L121.8 460.4L119.8 462.4Z"/><path d="M121.6 462.6L123.6 460.6L125.6 462.6L123.6 464.6Z"/><path d="M126.6 467.0L128.6 465.0L130.6 467.0L128.6 469.0Z"/><path d="M130.4 442.2L132.4 440.2L134.4 442.2L132.4 444.2Z"/><path d="M135.4 467.9L137.4 465.9L139.4 467.9L137.4 469.9Z"/><path d="M139.8 440.0L141.8 438.0L143.8 440.0L141.8 442.0Z"/><path d="M144.2 445.1L146.2 443.1L148.2 445.1L146.2 447.1Z"/><path d="M148.0 443.7L150.0 441.7L152.0 443.7L150.0 445.7Z"/><path d="M153.0 465.7L155.0 463.7L157.0 465.7L155.0 467.7Z"/><path d="M157.4 453.2L159.4 451.2L161.4 453.2L159.4 455.2Z"/><path d="M162.5 459.1L164.5 457.1L166.5 459.1L164.5 461.1Z"/><path d="M165.5 447.7L167.5 445.7L169.5 447.7L167.5 449.7Z"/><path d="M170.6 467.5L172.6 465.5L174.6 467.5L172.6 469.5Z"/><path d="M175.0 480.7L177.0 478.7L179.0 480.7L177.0 482.7Z"/><path d="M179.4 447.7L181.4 445.7L183.4 447.7L181.4 449.7Z"/><path d="M183.8 444.4L185.8 442.4L187.8 444.4L185.8 446.4Z"/><path d="M197.3 465.1L199.3 463.1L201.3 465.1L199.3 467.1Z"/><path d="M201.6 345.1L203.6 343.1L205.6 345.1L203.6 347.1Z"/><path d="M207.0 330.1L209.0 328.1L211.0 330.1L209.0 332.1Z"/><path d="M211.6 336.2L213.6 334.2L215.6 336.2L213.6 338.2Z"/><path d="M216.1 341.6L218.1 339.6L220.1 341.6L218.1 343.6Z"/><path d="M219.6 362.3L221.6 360.3L223.6 362.3L221.6 364.3Z"/><path d="M224.2 312.9L226.2 310.9L228.2 312.9L226.2 314.9Z"/><path d="M228.5 338.9L230.5 336.9L232.5 338.9L230.5 340.9Z"/><path d="M233.0 320.9L235.0 318.9L237.0 320.9L235.0 322.9Z"/><path d="M237.6 330.9L239.6 328.9L241.6 330.9L239.6 332.9Z"/><path d="M242.4 350.5L244.4 348.5L246.4 350.5L244.4 352.5Z"/><path d="M245.7 343.5L247.7 341.5L249.7 343.5L247.7 345.5Z"/><path d="M250.5 404.7L252.5 402.7L254.5 404.7L252.5 406.7Z"/><path d="M255.3 329.0L257.3 327.0L259.3 329.0L257.3 331.0Z"/><path d="M259.9 402.6L261.9 400.6L263.9 402.6L261.9 404.6Z"/><path d="M263.9 422.1L265.9 420.1L267.9 422.1L265.9 424.1Z"/><path d="M268.7 410.6L270.7 408.6L272.7 410.6L270.7 412.6Z"/><path d="M273.3 431.5L275.3 429.5L277.3 431.5L275.3 433.5Z"/><path d="M277.9 451.7L279.9 449.7L281.9 451.7L279.9 453.7Z"/><path d="M282.2 451.7L284.2 449.7L286.2 451.7L284.2 453.7Z"/><path d="M286.7 379.2L288.7 377.2L290.7 379.2L288.7 381.2Z"/><path d="M290.4 463.5L292.4 461.5L294.4 463.5L292.4 465.5Z"/><path d="M294.7 405.6L296.7 403.6L298.7 405.6L296.7 407.6Z"/><path d="M299.1 459.5L301.1 457.5L303.1 459.5L301.1 461.5Z"/><path d="M303.9 450.0L305.9 448.0L307.9 450.0L305.9 452.0Z"/><path d="M308.3 408.7L310.3 406.7L312.3 408.7L310.3 410.7Z"/><path d="M312.6 406.3L314.6 404.3L316.6 406.3L314.6 408.3Z"/><path d="M316.9 404.0L318.9 402.0L320.9 404.0L318.9 406.0Z"/><path d="M321.3 415.1L323.3 413.1L325.3 415.1L323.3 417.1Z"/><path d="M325.8 388.1L327.8 386.1L329.8 388.1L327.8 390.1Z"/><path d="M330.9 396.8L332.9 394.8L334.9 396.8L332.9 398.8Z"/><path d="M334.8 410.3L336.8 408.3L338.8 410.3L336.8 412.3Z"/><path d="M339.6 415.1L341.6 413.1L343.6 415.1L341.6 417.1Z"/><path d="M343.6 415.1L345.6 413.1L347.6 415.1L345.6 417.1Z"/><path d="M348.3 401.6L350.3 399.6L352.3 401.6L350.3 403.6Z"/><path d="M352.3 423.0L354.3 421.0L356.3 423.0L354.3 425.0Z"/><path d="M357.0 403.2L359.0 401.2L361.0 403.2L359.0 405.2Z"/><path d="M361.3 407.1L363.3 405.1L365.3 407.1L363.3 409.1Z"/><path d="M365.8 416.7L367.8 414.7L369.8 416.7L367.8 418.7Z"/><path d="M370.2 412.7L372.2 410.7L374.2 412.7L372.2 414.7Z"/><path d="M375.0 414.3L377.0 412.3L379.0 414.3L377.0 416.3Z"/><path d="M379.3 406.3L381.3 404.3L383.3 406.3L381.3 408.3Z"/><path d="M384.0 418.6L386.0 416.6L388.0 418.6L386.0 420.6Z"/><path d="M388.0 415.1L390.0 413.1L392.0 415.1L390.0 417.1Z"/><path d="M392.8 430.2L394.8 428.2L396.8 430.2L394.8 432.2Z"/><path d="M397.2 420.6L399.2 418.6L401.2 420.6L399.2 422.6Z"/><path d="M401.5 421.4L403.5 419.4L405.5 421.4L403.5 423.4Z"/><path d="M405.6 444.4L407.6 442.4L409.6 444.4L407.6 446.4Z"/><path d="M409.9 427.8L411.9 425.8L413.9 427.8L411.9 429.8Z"/><path d="M414.7 424.3L416.7 422.3L418.7 424.3L416.7 426.3Z"/><path d="M419.4 439.2L421.4 437.2L423.4 439.2L421.4 441.2Z"/><path d="M423.4 415.9L425.4 413.9L427.4 415.9L425.4 417.9Z"/><path d="M427.8 417.5L429.8 415.5L431.8 417.5L429.8 419.5Z"/><path d="M432.1 422.7L434.1 420.7L436.1 422.7L434.1 424.7Z"/><path d="M436.1 419.8L438.1 417.8L440.1 419.8L438.1 421.8Z"/><path d="M440.9 429.0L442.9 427.0L444.9 429.0L442.9 431.0Z"/><path d="M445.6 427.8L447.6 425.8L449.6 427.8L447.6 429.8Z"/><path d="M450.4 404.8L452.4 402.8L454.4 404.8L452.4 406.8Z"/><path d="M454.8 401.6L456.8 399.6L458.8 401.6L456.8 403.6Z"/><path d="M459.1 422.7L461.1 420.7L463.1 422.7L461.1 424.7Z"/><path d="M463.9 429.0L465.9 427.0L467.9 429.0L465.9 431.0Z"/><path d="M467.8 415.9L469.8 413.9L471.8 415.9L469.8 417.9Z"/><path d="M472.3 422.2L474.3 420.2L476.3 422.2L474.3 424.2Z"/><path d="M476.6 424.6L478.6 422.6L480.6 424.6L478.6 426.6Z"/><path d="M480.9 425.4L482.9 423.4L484.9 425.4L482.9 427.4Z"/><path d="M485.3 409.5L487.3 407.5L489.3 409.5L487.3 411.5Z"/><path d="M489.7 412.7L491.7 410.7L493.7 412.7L491.7 414.7Z"/><path d="M494.0 423.0L496.0 421.0L498.0 423.0L496.0 425.0Z"/><path d="M498.8 444.4L500.8 442.4L502.8 444.4L500.8 446.4Z"/><path d="M503.6 414.3L505.6 412.3L507.6 414.3L505.6 416.3Z"/><path d="M507.8 421.4L509.8 419.4L511.8 421.4L509.8 423.4Z"/><path d="M512.4 431.3L514.4 429.3L516.4 431.3L514.4 433.3Z"/><path d="M517.2 427.8L519.2 425.8L521.2 427.8L519.2 429.8Z"/><path d="M521.0 413.5L523.0 411.5L525.0 413.5L523.0 415.5Z"/><path d="M525.8 431.0L527.8 429.0L529.8 431.0L527.8 433.0Z"/><path d="M529.9 438.9L531.9 436.9L533.9 438.9L531.9 440.9Z"/><path d="M534.7 422.7L536.7 420.7L538.7 422.7L536.7 424.7Z"/><path d="M539.0 420.6L541.0 418.6L543.0 420.6L541.0 422.6Z"/><path d="M543.7 435.4L545.7 433.4L547.7 435.4L545.7 437.4Z"/><path d="M548.0 407.1L550.0 405.1L552.0 407.1L550.0 409.1Z"/><path d="M552.8 431.7L554.8 429.7L556.8 431.7L554.8 433.7Z"/><path d="M556.4 432.5L558.4 430.5L560.4 432.5L558.4 434.5Z"/><path d="M561.2 424.6L563.2 422.6L565.2 424.6L563.2 426.6Z"/><path d="M565.1 433.8L567.1 431.8L569.1 433.8L567.1 435.8Z"/><path d="M570.2 403.2L572.2 401.2L574.2 403.2L572.2 405.2Z"/><path d="M574.7 422.7L576.7 420.7L578.7 422.7L576.7 424.7Z"/><path d="M579.1 418.6L581.1 416.6L583.1 418.6L581.1 420.6Z"/><path d="M582.9 406.8L584.9 404.8L586.9 406.8L584.9 408.8Z"/><path d="M587.7 430.2L589.7 428.2L591.7 430.2L589.7 432.2Z"/><path d="M592.1 417.5L594.1 415.5L596.1 417.5L594.1 419.5Z"/><path d="M596.9 428.6L598.9 426.6L600.9 428.6L598.9 430.6Z"/><path d="M600.9 463.0L602.9 461.0L604.9 463.0L602.9 465.0Z"/><path d="M605.1 419.8L607.1 417.8L609.1 419.8L607.1 421.8Z"/><path d="M609.6 404.8L611.6 402.8L613.6 404.8L611.6 406.8Z"/><path d="M614.0 415.1L616.0 413.1L618.0 415.1L616.0 417.1Z"/><path d="M618.3 426.2L620.3 424.2L622.3 426.2L620.3 428.2Z"/><path d="M623.6 414.8L625.6 412.8L627.6 414.8L625.6 416.8Z"/><path d="M627.8 429.0L629.8 427.0L631.8 429.0L629.8 431.0Z"/><path d="M632.6 426.5L634.6 424.5L636.6 426.5L634.6 428.5Z"/><path d="M636.7 412.2L638.7 410.2L640.7 412.2L638.7 414.2Z"/><path d="M641.5 405.9L643.5 403.9L645.5 405.9L643.5 407.9Z"/><path d="M645.8 409.5L647.8 407.5L649.8 409.5L647.8 411.5Z"/><path d="M649.7 415.4L651.7 413.4L653.7 415.4L651.7 417.4Z"/><path d="M654.2 399.5L656.2 397.5L658.2 399.5L656.2 401.5Z"/><path d="M659.0 388.1L661.0 386.1L663.0 388.1L661.0 390.1Z"/><path d="M663.2 417.9L665.2 415.9L667.2 417.9L665.2 419.9Z"/><path d="M668.0 394.8L670.0 392.8L672.0 394.8L670.0 396.8Z"/><path d="M672.0 416.3L674.0 414.3L676.0 416.3L674.0 418.3Z"/><path d="M676.4 409.5L678.4 407.5L680.4 409.5L678.4 411.5Z"/><path d="M681.2 367.8L683.2 365.8L685.2 367.8L683.2 369.8Z"/><path d="M685.9 404.8L687.9 402.8L689.9 404.8L687.9 406.8Z"/><path d="M689.7 419.8L691.7 417.8L693.7 419.8L691.7 421.8Z"/><path d="M694.2 421.1L696.2 419.1L698.2 421.1L696.2 423.1Z"/><path d="M699.0 417.9L701.0 415.9L703.0 417.9L701.0 419.9Z"/><path d="M703.7 427.8L705.7 425.8L707.7 427.8L705.7 429.8Z"/><path d="M708.2 424.3L710.2 422.3L712.2 424.3L710.2 426.3Z"/><path d="M712.4 423.0L714.4 421.0L716.4 423.0L714.4 425.0Z"/><path d="M716.4 411.9L718.4 409.9L720.4 411.9L718.4 413.9Z"/><path d="M721.5 412.2L723.5 410.2L725.5 412.2L723.5 414.2Z"/><path d="M725.6 427.8L727.6 425.8L729.6 427.8L727.6 429.8Z"/><path d="M730.4 428.1L732.4 426.1L734.4 428.1L732.4 430.1Z"/><path d="M734.0 422.5L736.0 420.5L738.0 422.5L736.0 424.5Z"/><path d="M738.8 382.9L740.8 380.9L742.8 382.9L740.8 384.9Z"/><path d="M743.1 407.5L745.1 405.5L747.1 407.5L745.1 409.5Z"/><path d="M747.4 408.6L749.4 406.6L751.4 408.6L749.4 410.6Z"/><path d="M751.8 403.5L753.8 401.5L755.8 403.5L753.8 405.5Z"/><path d="M756.6 378.9L758.6 376.9L760.6 378.9L758.6 380.9Z"/><path d="M760.5 426.5L762.5 424.5L764.5 426.5L762.5 428.5Z"/><path d="M765.3 394.8L767.3 392.8L769.3 394.8L767.3 396.8Z"/><path d="M769.6 417.5L771.6 415.5L773.6 417.5L771.6 419.5Z"/><path d="M774.3 412.7L776.3 410.7L778.3 412.7L776.3 414.7Z"/><path d="M778.5 421.3L780.5 419.3L782.5 421.3L780.5 423.3Z"/><path d="M783.2 414.6L785.2 412.6L787.2 414.6L785.2 416.6Z"/><path d="M787.5 412.2L789.5 410.2L791.5 412.2L789.5 414.2Z"/><path d="M791.8 428.9L793.8 426.9L795.8 428.9L793.8 430.9Z"/><path d="M795.9 417.5L797.9 415.5L799.9 417.5L797.9 419.5Z"/><path d="M800.7 415.9L802.7 413.9L804.7 415.9L802.7 417.9Z"/><path d="M805.0 425.4L807.0 423.4L809.0 425.4L807.0 427.4Z"/><path d="M809.7 403.5L811.7 401.5L813.7 403.5L811.7 405.5Z"/><path d="M814.0 417.5L816.0 415.5L818.0 417.5L816.0 419.5Z"/><path d="M818.5 409.8L820.5 407.8L822.5 409.8L820.5 411.8Z"/><path d="M822.9 409.5L824.9 407.5L826.9 409.5L824.9 411.5Z"/><path d="M827.2 451.9L829.2 449.9L831.2 451.9L829.2 453.9Z"/><path d="M831.5 379.4L833.5 377.4L835.5 379.4L833.5 381.4Z"/><path d="M836.3 449.5L838.3 447.5L840.3 449.5L838.3 451.5Z"/><path d="M839.9 387.6L841.9 385.6L843.9 387.6L841.9 389.6Z"/><path d="M845.1 371.7L847.1 369.7L849.1 371.7L847.1 373.7Z"/><path d="M848.8 385.7L850.8 383.7L852.8 385.7L850.8 387.7Z"/><path d="M853.9 390.5L855.9 388.5L857.9 390.5L855.9 392.5Z"/><path d="M857.8 402.2L859.8 400.2L861.8 402.2L859.8 404.2Z"/><path d="M863.1 381.6L865.1 379.6L867.1 381.6L865.1 383.6Z"/><path d="M866.9 387.3L868.9 385.3L870.9 387.3L868.9 389.3Z"/><path d="M871.3 393.2L873.3 391.2L875.3 393.2L873.3 395.2Z"/><path d="M875.8 393.2L877.8 391.2L879.8 393.2L877.8 395.2Z"/><path d="M880.1 414.9L882.1 412.9L884.1 414.9L882.1 416.9Z"/><path d="M884.3 407.9L886.3 405.9L888.3 407.9L886.3 409.9Z"/><path d="M889.6 393.2L891.6 391.2L893.6 393.2L891.6 395.2Z"/><path d="M893.6 409.8L895.6 407.8L897.6 409.8L895.6 411.8Z"/><path d="M898.3 385.7L900.3 383.7L902.3 385.7L900.3 387.7Z"/><path d="M902.3 384.4L904.3 382.4L906.3 384.4L904.3 386.4Z"/><path d="M907.0 417.8L909.0 415.8L911.0 417.8L909.0 419.8Z"/><path d="M911.3 400.6L913.3 398.6L915.3 400.6L913.3 402.6Z"/><path d="M916.1 407.5L918.1 405.5L920.1 407.5L918.1 409.5Z"/><path d="M920.2 401.9L922.2 399.9L924.2 401.9L922.2 403.9Z"/><path d="M925.0 411.7L927.0 409.7L929.0 411.7L927.0 413.7Z"/><path d="M929.3 356.2L931.3 354.2L933.3 356.2L931.3 358.2Z"/><path d="M933.2 399.5L935.2 397.5L937.2 399.5L935.2 401.5Z"/><path d="M937.7 409.8L939.7 407.8L941.7 409.8L939.7 411.8Z"/><path d="M942.0 411.4L944.0 409.4L946.0 411.4L944.0 413.4Z"/><path d="M946.7 415.9L948.7 413.9L950.7 415.9L948.7 417.9Z"/><path d="M951.5 416.3L953.5 414.3L955.5 416.3L953.5 418.3Z"/><path d="M955.6 410.0L957.6 408.0L959.6 410.0L957.6 412.0Z"/><path d="M959.9 418.6L961.9 416.6L963.9 418.6L961.9 420.6Z"/><path d="M964.2 405.6L966.2 403.6L968.2 405.6L966.2 407.6Z"/><path d="M969.0 397.9L971.0 395.9L973.0 397.9L971.0 399.9Z"/><path d="M973.4 400.5L975.4 398.5L977.4 400.5L975.4 402.5Z"/><path d="M977.8 403.2L979.8 401.2L981.8 403.2L979.8 405.2Z"/><path d="M982.1 404.0L984.1 402.0L986.1 404.0L984.1 406.0Z"/><path d="M986.1 427.0L988.1 425.0L990.1 427.0L988.1 429.0Z"/><path d="M990.9 392.1L992.9 390.1L994.9 392.1L992.9 394.1Z"/><path d="M995.6 386.2L997.6 384.2L999.6 386.2L997.6 388.2Z"/><path d="M1000.1 384.1L1002.1 382.1L1004.1 384.1L1002.1 386.1Z"/><path d="M1004.3 413.2L1006.3 411.2L1008.3 413.2L1006.3 415.2Z"/><path d="M1009.1 400.8L1011.1 398.8L1013.1 400.8L1011.1 402.8Z"/><path d="M1013.9 402.4L1015.9 400.4L1017.9 402.4L1015.9 404.4Z"/><path d="M1017.8 431.7L1019.8 429.7L1021.8 431.7L1019.8 433.7Z"/><path d="M1022.6 399.5L1024.6 397.5L1026.6 399.5L1024.6 401.5Z"/><path d="M1026.6 410.0L1028.6 408.0L1030.6 410.0L1028.6 412.0Z"/><path d="M1030.9 400.5L1032.9 398.5L1034.9 400.5L1032.9 402.5Z"/><path d="M1035.3 396.0L1037.3 394.0L1039.3 396.0L1037.3 398.0Z"/><path d="M1039.7 413.2L1041.7 411.2L1043.7 413.2L1041.7 415.2Z"/><path d="M1044.0 410.6L1046.0 408.6L1048.0 410.6L1046.0 412.6Z"/><path d="M1049.3 407.5L1051.3 405.5L1053.3 407.5L1051.3 409.5Z"/><path d="M1053.6 385.7L1055.6 383.7L1057.6 385.7L1055.6 387.7Z"/></g>
<g clip-path="url(#bar)"><polyline points="70.0,431.2 75.2,439.3 79.6,360.9 84.7,446.6 88.4,424.6 93.5,380.7 97.2,392.3 102.3,386.6 106.0,374.1 111.1,380.7 114.8,374.1 119.8,371.9 123.6,359.3 128.6,398.2 132.4,409.9 137.4,414.7 141.8,397.6 146.2,393.8 150.0,385.1 155.0,375.2 159.4,379.1 164.5,379.6 167.5,403.7 172.6,389.5 177.0,382.9 181.4,394.9 185.8,392.7 194.8,401.5 199.3,397.2 203.6,475.8 209.0,489.3 212.8,512.1 217.6,492.8 222.4,497.3 226.2,498.1 230.5,477.7 235.0,482.6 239.6,500.8 243.9,461.6 248.5,490.1 253.0,447.7 257.3,480.4 261.9,424.8 266.4,416.0 270.7,412.8 275.3,406.8 279.9,385.4 284.2,381.1 288.7,443.6 292.4,388.1 297.1,402.4 301.1,392.1 305.9,384.6 310.3,407.1 314.6,427.8 318.9,396.8 323.3,425.9 327.8,428.6 332.5,432.5 336.8,426.2 341.6,415.1 345.6,433.8 350.3,422.2 354.3,401.6 359.5,418.6 363.3,411.1 367.8,411.9 372.2,409.5 377.0,423.3 381.3,404.8 386.0,413.5 390.0,405.9 394.8,424.3 399.2,408.7 403.5,408.9 407.9,410.0 412.4,406.8 416.7,415.1 420.6,401.6 425.4,399.2 429.8,410.6 434.1,412.7 438.9,425.4 442.9,408.7 447.6,404.3 452.1,424.9 456.3,419.0 461.1,408.7 465.4,414.8 469.8,414.3 474.6,406.8 478.6,417.9 483.3,411.9 487.3,450.3 491.7,413.2 496.0,404.8 501.3,409.0 505.6,410.3 509.8,414.3 514.4,410.6 519.2,407.9 523.0,440.2 527.8,401.6 531.9,404.8 536.7,407.1 541.0,411.1 545.7,403.2 550.0,404.8 554.8,409.5 558.4,418.6 563.2,400.5 567.1,409.0 572.2,429.0 576.7,418.6 581.1,414.3 585.4,418.6 589.7,409.5 594.1,400.0 598.9,423.8 602.9,375.4 607.1,415.1 611.6,432.5 616.0,431.0 620.3,414.3 625.6,396.8 629.8,409.5 634.6,422.2 638.7,423.8 643.5,427.5 647.8,406.8 652.1,428.6 656.2,451.6 661.0,417.5 665.2,423.8 670.0,447.6 674.0,393.2 678.7,428.6 683.2,460.3 687.9,434.4 691.7,432.5 696.2,436.5 701.0,422.2 705.7,409.5 710.2,418.3 714.4,421.4 718.4,423.8 723.5,432.5 727.6,419.0 731.9,400.8 736.0,407.5 740.8,433.7 745.1,428.9 749.8,414.6 754.1,413.3 758.6,446.7 763.0,412.2 767.3,430.5 771.6,418.1 776.0,417.8 780.5,430.2 785.2,421.3 789.5,417.8 793.8,418.6 797.9,403.5 802.7,395.9 807.0,407.9 811.7,435.2 816.0,422.2 820.5,414.3 824.9,414.3 829.7,399.5 833.5,428.9 838.3,436.0 842.4,465.7 847.1,449.2 851.4,440.0 855.9,450.3 859.8,432.4 865.1,465.7 868.9,440.0 873.7,446.7 877.8,441.3 882.5,417.5 886.3,427.6 891.6,425.4 895.6,415.9 900.3,430.5 904.3,439.2 909.5,421.3 913.3,417.8 918.1,429.2 922.2,423.3 927.0,421.7 931.3,461.9 935.6,413.3 939.7,413.3 944.4,413.8 948.7,427.6 953.5,417.5 957.6,406.3 962.4,430.2 966.2,422.7 970.6,423.3 975.1,419.8 979.8,438.1 984.1,436.5 988.9,413.5 993.2,434.1 997.3,411.1 1002.1,412.2 1007.1,426.2 1011.1,441.7 1015.9,434.9 1019.8,415.1 1024.6,410.3 1028.6,419.8 1033.8,433.8 1037.3,427.5 1041.7,430.2 1046.0,413.5 1051.3,433.8 1055.6,417.5" fill="none" stroke="#d8c0e8" stroke-width="1.35"/><polyline points="70.0,465.7 75.2,441.1 79.6,460.9 84.7,459.8 88.4,473.0 93.5,467.5 97.2,469.2 102.3,453.8 106.0,454.3 111.1,459.1 114.8,443.7 119.8,460.4 123.6,462.6 128.6,467.0 132.4,442.2 137.4,467.9 141.8,440.0 146.2,445.1 150.0,443.7 155.0,465.7 159.4,453.2 164.5,459.1 167.5,447.7 172.6,467.5 177.0,480.7 181.4,447.7 185.8,444.4 199.3,465.1 203.6,345.1 209.0,330.1 213.6,336.2 218.1,341.6 221.6,362.3 226.2,312.9 230.5,338.9 235.0,320.9 239.6,330.9 244.4,350.5 247.7,343.5 252.5,404.7 257.3,329.0 261.9,402.6 265.9,422.1 270.7,410.6 275.3,431.5 279.9,451.7 284.2,451.7 288.7,379.2 292.4,463.5 296.7,405.6 301.1,459.5 305.9,450.0 310.3,408.7 314.6,406.3 318.9,404.0 323.3,415.1 327.8,388.1 332.9,396.8 336.8,410.3 341.6,415.1 345.6,415.1 350.3,401.6 354.3,423.0 359.0,403.2 363.3,407.1 367.8,416.7 372.2,412.7 377.0,414.3 381.3,406.3 386.0,418.6 390.0,415.1 394.8,430.2 399.2,420.6 403.5,421.4 407.6,444.4 411.9,427.8 416.7,424.3 421.4,439.2 425.4,415.9 429.8,417.5 434.1,422.7 438.1,419.8 442.9,429.0 447.6,427.8 452.4,404.8 456.8,401.6 461.1,422.7 465.9,429.0 469.8,415.9 474.3,422.2 478.6,424.6 482.9,425.4 487.3,409.5 491.7,412.7 496.0,423.0 500.8,444.4 505.6,414.3 509.8,421.4 514.4,431.3 519.2,427.8 523.0,413.5 527.8,431.0 531.9,438.9 536.7,422.7 541.0,420.6 545.7,435.4 550.0,407.1 554.8,431.7 558.4,432.5 563.2,424.6 567.1,433.8 572.2,403.2 576.7,422.7 581.1,418.6 584.9,406.8 589.7,430.2 594.1,417.5 598.9,428.6 602.9,463.0 607.1,419.8 611.6,404.8 616.0,415.1 620.3,426.2 625.6,414.8 629.8,429.0 634.6,426.5 638.7,412.2 643.5,405.9 647.8,409.5 651.7,415.4 656.2,399.5 661.0,388.1 665.2,417.9 670.0,394.8 674.0,416.3 678.4,409.5 683.2,367.8 687.9,404.8 691.7,419.8 696.2,421.1 701.0,417.9 705.7,427.8 710.2,424.3 714.4,423.0 718.4,411.9 723.5,412.2 727.6,427.8 732.4,428.1 736.0,422.5 740.8,382.9 745.1,407.5 749.4,408.6 753.8,403.5 758.6,378.9 762.5,426.5 767.3,394.8 771.6,417.5 776.3,412.7 780.5,421.3 785.2,414.6 789.5,412.2 793.8,428.9 797.9,417.5 802.7,415.9 807.0,425.4 811.7,403.5 816.0,417.5 820.5,409.8 824.9,409.5 829.2,451.9 833.5,379.4 838.3,449.5 841.9,387.6 847.1,371.7 850.8,385.7 855.9,390.5 859.8,402.2 865.1,381.6 868.9,387.3 873.3,393.2 877.8,393.2 882.1,414.9 886.3,407.9 891.6,393.2 895.6,409.8 900.3,385.7 904.3,384.4 909.0,417.8 913.3,400.6 918.1,407.5 922.2,401.9 927.0,411.7 931.3,356.2 935.2,399.5 939.7,409.8 944.0,411.4 948.7,415.9 953.5,416.3 957.6,410.0 961.9,418.6 966.2,405.6 971.0,397.9 975.4,400.5 979.8,403.2 984.1,404.0 988.1,427.0 992.9,392.1 997.6,386.2 1002.1,384.1 1006.3,413.2 1011.1,400.8 1015.9,402.4 1019.8,431.7 1024.6,399.5 1028.6,410.0 1032.9,400.5 1037.3,396.0 1041.7,413.2 1046.0,410.6 1051.3,407.5 1055.6,385.7" fill="none" stroke="#9878c8" stroke-width="1.35"/><g fill="#d0b8e8"><rect x="144.4" y="392.0" width="3.6" height="3.6"/><rect x="148.2" y="383.3" width="3.6" height="3.6"/><rect x="153.2" y="373.4" width="3.6" height="3.6"/><rect x="157.6" y="377.3" width="3.6" height="3.6"/><rect x="162.7" y="377.8" width="3.6" height="3.6"/></g><g fill="#8868c0"><path d="M144.2 445.1L146.2 443.1L148.2 445.1L146.2 447.1Z"/><path d="M148.0 443.7L150.0 441.7L152.0 443.7L150.0 445.7Z"/><path d="M153.0 465.7L155.0 463.7L157.0 465.7L155.0 467.7Z"/><path d="M157.4 453.2L159.4 451.2L161.4 453.2L159.4 455.2Z"/><path d="M162.5 459.1L164.5 457.1L166.5 459.1L164.5 461.1Z"/></g><line x1="148" y1="90.75" x2="162" y2="90.75" stroke="#3050b8" stroke-width="1.6"/><line x1="148" y1="199.66" x2="162" y2="199.66" stroke="#3050b8" stroke-width="1.6"/><line x1="148" y1="308.56" x2="162" y2="308.56" stroke="#3050b8" stroke-width="1.6"/><line x1="148" y1="417.47" x2="162" y2="417.47" stroke="#3050b8" stroke-width="1.6"/><line x1="148" y1="526.4" x2="162" y2="526.4" stroke="#3050b8" stroke-width="1.6"/></g>
<line x1="298.2" y1="249.5" x2="239.5" y2="302.7" stroke="#111" stroke-width="2.9" stroke-linecap="round"/><line x1="239.5" y1="302.7" x2="250.9" y2="301.9" stroke="#111" stroke-width="2.9" stroke-linecap="round"/><line x1="239.5" y1="302.7" x2="243" y2="292" stroke="#111" stroke-width="2.9" stroke-linecap="round"/>
<line x1="298.2" y1="249.5" x2="283.5" y2="375.6" stroke="#111" stroke-width="2.9" stroke-linecap="round"/><line x1="283.5" y1="375.6" x2="279.6" y2="368.7" stroke="#111" stroke-width="2.9" stroke-linecap="round"/><line x1="283.5" y1="375.6" x2="290" y2="368.3" stroke="#111" stroke-width="2.9" stroke-linecap="round"/>
<line x1="483.2" y1="509.9" x2="426.8" y2="448.1" stroke="#111" stroke-width="2.9" stroke-linecap="round"/><line x1="426.8" y1="448.1" x2="434.8" y2="449.9" stroke="#111" stroke-width="2.9" stroke-linecap="round"/><line x1="426.8" y1="448.1" x2="428.1" y2="456.2" stroke="#111" stroke-width="2.9" stroke-linecap="round"/>
<line x1="491.7" y1="499.8" x2="489.9" y2="456.9" stroke="#111" stroke-width="2.9" stroke-linecap="round"/><line x1="489.9" y1="456.9" x2="485" y2="468.3" stroke="#111" stroke-width="2.9" stroke-linecap="round"/><line x1="489.9" y1="456.9" x2="495.3" y2="467.9" stroke="#111" stroke-width="2.9" stroke-linecap="round"/>
<text x="302.6" y="252.2" font-family="Liberation Sans" font-weight="bold" font-size="19.6" fill="#111">A</text>
<text x="488.3" y="523.3" font-family="Liberation Sans" font-weight="bold" font-size="19.6" fill="#111">B</text>
<circle cx="1128.7" cy="305" r="6.3" fill="#ee4a22"/>
<rect x="1122" y="318.5" width="13.8" height="13.2" fill="#fbb322"/>
<text x="1139" y="312" font-family="Liberation Sans" font-size="12.6" fill="#111">NCI-H209 Cy3</text>
<text x="1139" y="332" font-family="Liberation Sans" font-size="12.6" fill="#111">NCI-H209 Cy5</text>
</svg>
</body></html>
